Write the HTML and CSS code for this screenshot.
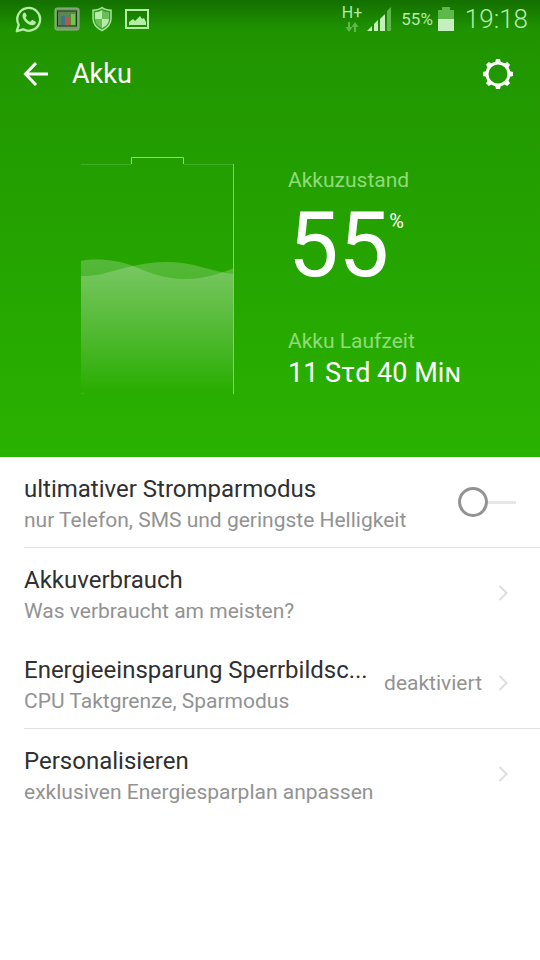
FILE: index.html
```
<!DOCTYPE html>
<html lang="de">
<head>
<meta charset="UTF-8">
<meta name="viewport" content="width=device-width, initial-scale=1.0">
<title>Akku</title>
<link rel="stylesheet" href="styles.css">
</head>
<body>
<header class="top">
	<div class="status">
		<div class="notifications">
			<!-- messenger -->
			<svg width="28" height="28" viewBox="0 0 28 28">
				<path d="M1.8 26.2l1.900-6.400A11.400 11.400 0 1 1 8.200 24.300z" fill="none" stroke="#b5eca8" stroke-width="2.300" stroke-linejoin="round"/>
				<path d="M9.600 7.500c-.6 0-2.100 1.200-2.100 3.200 0 4.300 5.600 9.600 10 9.600 2.200 0 3.400-1.600 3.400-3.200 0-.5-3.400-2.300-3.900-2.100-.7.3-1.200 1.900-1.900 1.800-1.700-.5-3.700-2.400-4.400-4.100-.2-.6 1-1.200 1-1.900-.1-.9-1.100-3.300-2.100-3.300z" fill="#b5eca8"/>
			</svg>
			<!-- task monitor -->
			<svg width="26" height="24" viewBox="0 0 26 24">
				<rect x="1" y="1" width="24" height="22" rx="2" fill="#779b6b" stroke="#91b587"/>
				<rect x="3.500" y="4" width="19" height="15" fill="#5d864f" stroke="#183a10"/>
				<path d="M7 9h4v9H7z" fill="#3c7592"/>
				<path d="M12 11h4v7h-4z" fill="#ba5740"/>
				<path d="M17 7h4v11h-4z" fill="#6fc83e"/>
			</svg>
			<!-- shield -->
			<svg width="22" height="26" viewBox="0 0 22 26">
				<path d="M11 1.500c2 1.700 5 2.600 9 2.700v8.300c0 5.500-3.500 9.300-9 12-5.500-2.700-9-6.500-9-12V4.200c4-.1 7-1 9-2.700z" fill="#379d22" stroke="#a9e49a" stroke-width="1.500"/>
				<path d="M11 4v9H4V6.300C7 6.100 9 5.500 11 4zM11 13h7c-.2 4.300-2.600 7-7 9.200z" fill="#b5eca8"/>
				<path d="M11 4v9h7V6.300C15 6.100 13 5.500 11 4zM11 13H4c.2 4.300 2.600 7 7 9.200z" fill="#6bbd59"/>
			</svg>
			<!-- picture -->
			<svg width="26" height="22" viewBox="0 0 26 22">
				<rect x="2" y="2" width="22" height="18" fill="none" stroke="#b5eca8" stroke-width="2"/>
				<path d="M5 17v-3l4-3 2 2 5-5 2 3 2-1 2 4v3z" fill="#b5eca8"/>
			</svg>
		</div>
		<div class="system">
			<div class="network">
				<span>H+</span>
				<svg width="14" height="10" viewBox="0 0 14 10">
					<path d="M3 0h2v5h2.500L4 10 .5 5H3zM9 10h2V5h2.500L10 0 6.500 5H9z" fill="#5cb94a"/>
				</svg>
			</div>
			<svg width="25" height="24" viewBox="0 0 25 24">
				<path d="M0 24l5-5v5z" fill="#c5efba"/>
				<path d="M7 24v-7l4-4v11z" fill="#c5efba"/>
				<path d="M13 24V12l5-5v17z" fill="#c5efba"/>
				<path d="M20 24V4l4-4v24z" fill="#5cb94a"/>
			</svg>
			<span class="percent">55%</span>
			<svg width="16" height="24" viewBox="0 0 16 24">
				<path d="M4 0h8v3h4v9H0V3h4z" fill="#5cb94a"/>
				<path d="M0 12h16v12H0z" fill="#c5efc0"/>
			</svg>
			<time class="clock">19:18</time>
		</div>
	</div>
	<nav class="bar">
		<button class="icon" type="button" aria-label="Zurück">
			<svg width="26" height="26" viewBox="0 0 26 26">
				<path d="M13 2L2.500 13 13 24M2.500 13H25" fill="none" stroke="#fff" stroke-width="3"/>
			</svg>
		</button>
		<h1>Akku</h1>
		<button class="icon" type="button" aria-label="Einstellungen">
			<svg width="32" height="32" viewBox="-16 -16 32 32">
				<circle r="11" fill="none" stroke="#fff" stroke-width="3"/>
				<g id="teeth" fill="#fff">
					<path d="M-3 -11l1-4h4l1 4zM-3 11l1 4h4l1-4zM-11 -3l-4 1v4l4 1zM11 -3l4 1v4l-4 1z"/>
				</g>
				<use href="#teeth" transform="rotate(45)"/>
			</svg>
		</button>
	</nav>
	<section class="state">
		<svg class="battery" width="154" height="238" viewBox="0 0 154 238">
			<defs>
				<linearGradient id="fill" x1="0" y1="104" x2="0" y2="236" gradientUnits="userSpaceOnUse">
					<stop offset="0" stop-color="#fff" stop-opacity=".22"/>
					<stop offset="1" stop-color="#fff" stop-opacity="0"/>
				</linearGradient>
			</defs>
			<path d="M0 104C16 101 36 103 52 109C72 117 84 122 104 122C124 122 138 117 153 111V237H0z" fill="url(#fill)"/>
			<path d="M0 119C18 120 36 112 52 109C78 103 100 104 120 110C132 113 142 116 153 117V237H0z" fill="url(#fill)"/>
			<path d="M50.500 7V.5H102.500V7" fill="none" stroke="#85e368"/>
			<path d="M0 7.500H50M103 7.500H153M0 236.500H3" fill="none" stroke="#43b02b"/>
			<path d="M152.500 7V237" fill="none" stroke="#78d95c"/>
		</svg>
		<dl class="figures">
			<dt>Akkuzustand</dt>
			<dd class="level">55<sup>%</sup></dd>
			<dt>Akku Laufzeit</dt>
			<dd class="runtime">11 Sτd 40 Miɴ</dd>
		</dl>
	</section>
</header>
<main class="list">
	<label class="row line" for="ultra">
		<span class="text">
			<span class="name">ultimativer Stromparmodus</span>
			<span class="hint">nur Telefon, SMS und geringste Helligkeit</span>
		</span>
		<input class="switch" id="ultra" type="checkbox">
	</label>
	<a class="row" href="#verbrauch">
		<span class="text">
			<span class="name">Akkuverbrauch</span>
			<span class="hint">Was verbraucht am meisten?</span>
		</span>
		<svg class="chevron" width="10" height="16" viewBox="0 0 10 16"><path d="M1.500 1l7 7-7 7"/></svg>
	</a>
	<a class="row line" href="#sperrbildschirm">
		<span class="text">
			<span class="name">Energieeinsparung Sperrbildsc...</span>
			<span class="hint">CPU Taktgrenze, Sparmodus</span>
		</span>
		<span class="value">deaktiviert</span>
		<svg class="chevron" width="10" height="16" viewBox="0 0 10 16"><path d="M1.500 1l7 7-7 7"/></svg>
	</a>
	<a class="row" href="#personalisieren">
		<span class="text">
			<span class="name">Personalisieren</span>
			<span class="hint">exklusiven Energiesparplan anpassen</span>
		</span>
		<svg class="chevron" width="10" height="16" viewBox="0 0 10 16"><path d="M1.500 1l7 7-7 7"/></svg>
	</a>
</main>
</body>
</html>
```
FILE: styles.css
```
*, ::before, ::after {
	box-sizing: border-box;
}
body {
	margin: 0;
	background: #fff;
	color: #303030;
	font-family: Roboto, "Noto Sans", sans-serif;
	font-size: 21px;
}
svg {
	display: block;
	flex: none;
}
.top {
	background: linear-gradient(#137000, #1f9300 30px, #219800 80px, #2ab200);
	color: #fff;
	padding-bottom: 62px;
}

/* status bar */
.status {
	display: flex;
	justify-content: space-between;
	align-items: center;
	height: 38px;
	padding: 0 12px 0 15px;
	color: #b5eca8;
}
.notifications, .system {
	display: flex;
	align-items: center;
}
.notifications {
	gap: 11px;
}
.system {
	gap: 5px;
}
.network {
	display: flex;
	flex-direction: column;
	align-items: center;
	gap: 2px;
	font-size: 16px;
	line-height: 14px;
}
.percent {
	font-size: 17px;
	margin-left: 4px;
}
.clock {
	font-size: 26px;
	font-weight: 300;
	margin-left: 6px;
}

/* title bar */
.bar {
	display: flex;
	align-items: center;
	height: 72px;
	padding: 0 26px 0 23px;
}
.bar h1 {
	flex: 1;
	margin: 0 0 0 23px;
	font-size: 27px;
	font-weight: 400;
}
.icon {
	padding: 0;
	border: 0;
	background: none;
}

/* battery and figures */
.state {
	display: flex;
	gap: 53px;
	padding: 47px 0 0 15%;
}
.figures {
	margin: 0;
	padding-top: 10px;
	white-space: nowrap;
}
.figures dt {
	color: #8fdc7a;
	font-size: 21px;
	line-height: 26px;
}
.figures dd {
	margin: 0;
}
.figures .level {
	display: flex;
	font-size: 90px;
	line-height: 106px;
	margin-bottom: 29px;
}
.level sup {
	font-size: 20px;
	line-height: 24px;
	padding-top: 16px;
}
.figures .runtime {
	font-size: 27px;
	line-height: 38px;
}

/* settings list */
.row {
	display: flex;
	align-items: center;
	gap: 16px;
	min-height: 90px;
	margin-left: 24px;
	padding-right: 32px;
	color: inherit;
	text-decoration: none;
}
.row.line {
	border-bottom: 1px solid #e2e2e2;
	min-height: 91px;
}
.text {
	flex: 1;
	min-width: 0;
	padding-top: 4px;
}
.name, .hint {
	display: block;
	overflow: hidden;
	text-overflow: ellipsis;
	white-space: nowrap;
}
.name {
	font-size: 24px;
	line-height: 32px;
}
.hint, .value {
	color: #929292;
	font-size: 21px;
	line-height: 30px;
}
.chevron {
	fill: none;
	stroke: #dedede;
	stroke-width: 2;
}
.switch {
	appearance: none;
	display: flex;
	align-items: center;
	flex: none;
	width: 58px;
	height: 30px;
	margin: 0 -8px 0 0;
}
.switch::before {
	content: "";
	width: 30px;
	height: 30px;
	border: 3px solid #929292;
	border-radius: 50%;
}
.switch::after {
	content: "";
	flex: 1;
	height: 3px;
	background: #e6e6e6;
}
.switch:checked {
	flex-direction: row-reverse;
}
.switch:checked::before {
	border-color: #2ab200;
}
```
